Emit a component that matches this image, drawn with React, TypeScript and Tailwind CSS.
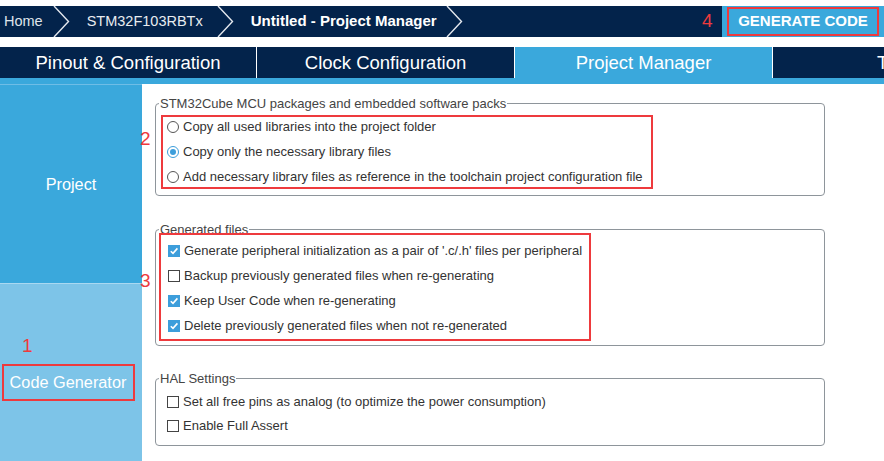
import React from 'react';

const RED = '#ee3a3d';

function Chevron() {
  return (
    <svg width="17" height="31" viewBox="0 0 17 31" className="shrink-0">
      <path d="M1 0 L15.5 15.5 L1 31" fill="none" stroke="#e4e8ee" strokeWidth="1.4" />
    </svg>
  );
}

function Radio({ checked }: { checked?: boolean }) {
  return (
    <span
      className={`flex h-[12px] w-[12px] shrink-0 items-center justify-center rounded-full border bg-white ${
        checked ? 'border-[#3d9edb]' : 'border-[#555]'
      }`}
    >
      {checked && <span className="h-[6px] w-[6px] rounded-full bg-[#3d9edb]" />}
    </span>
  );
}

function Check({ checked }: { checked?: boolean }) {
  if (checked) {
    return (
      <span className="flex h-[12px] w-[12px] shrink-0 items-center justify-center bg-[#3d9edb]">
        <svg width="10" height="10" viewBox="0 0 10 10">
          <path d="M1.8 5.2 L4 7.4 L8.4 2.4" fill="none" stroke="white" strokeWidth="1.6" />
        </svg>
      </span>
    );
  }
  return <span className="h-[12px] w-[12px] shrink-0 border border-[#444] bg-white" />;
}

function Row({ children, control }: { children: React.ReactNode; control: React.ReactNode }) {
  return (
    <div className="flex h-[20px] items-center gap-[4px] text-[13px] text-[#333] whitespace-nowrap">
      {control}
      <span>{children}</span>
    </div>
  );
}

export default function App() {
  return (
    <div
      className="relative h-[461px] w-[884px] overflow-hidden bg-white"
      style={{ fontFamily: '"Liberation Sans", Arial, sans-serif' }}
    >
      {/* breadcrumb */}
      <div className="mt-[6px] flex h-[31px] items-center bg-[#03234b] text-[14.5px]">
        <span className="ml-[4px] text-[#dfe4ea]">Home</span>
        <span className="ml-[10px]"><Chevron /></span>
        <span className="ml-[17px] text-[#e8ecf0]">STM32F103RBTx</span>
        <span className="ml-[14px]"><Chevron /></span>
        <span className="ml-[17px] text-[15px] font-bold text-white">Untitled - Project Manager</span>
        <span className="ml-[9px]"><Chevron /></span>
        <div className="ml-auto flex h-full w-[162px] items-center justify-center bg-[#3aa8dc]">
          <div
            className="flex h-[29px] w-[152px] items-center justify-center border-2 text-[15px] font-bold text-white"
            style={{ borderColor: RED }}
          >
            GENERATE CODE
          </div>
        </div>
      </div>

      {/* tabs */}
      <div className="mt-[10px] flex h-[31px] text-[18.5px] text-white">
        <div className="flex w-[257px] shrink-0 items-center justify-center border-r border-white bg-[#03234b]">Pinout &amp; Configuration</div>
        <div className="flex w-[258px] shrink-0 items-center justify-center border-r border-white bg-[#03234b]">Clock Configuration</div>
        <div className="flex w-[258px] shrink-0 items-center justify-center border-r border-white bg-[#3aa8dc]">Project Manager</div>
        <div className="flex w-[240px] shrink-0 items-center bg-[#03234b] pl-[104px]">Tools</div>
      </div>
      <div className="h-[6px] bg-[#3aa8dc]" />

      <div className="flex h-[377px]">
        {/* sidebar */}
        <div className="flex w-[142px] shrink-0 flex-col text-[16.3px] text-white">
          <div className="flex h-[199px] items-center justify-center border-t border-[#6fbde6] bg-[#3aa8dc]">Project</div>
          <div className="flex flex-1 flex-col items-center border-t border-[#a9d8f1] bg-[#7dc4e8] pt-[80px]">
            <div className="flex h-[37px] w-[133px] items-center justify-center border-2 -ml-[6px]" style={{ borderColor: RED }}>
              Code Generator
            </div>
          </div>
        </div>

        {/* content */}
        <div className="flex-1">
          <fieldset className="ml-[13px] mt-[12px] w-[670px] rounded-[4px] border border-[#8e959b] pb-[6px]">
            <legend className="ml-[3px] px-[1px] text-[13px] leading-[15px] text-[#444]">
              STM32Cube MCU packages and embedded software packs
            </legend>
            <div className="ml-[5px] mt-[4px] flex h-[74px] w-[492px] flex-col gap-[5px] border-2 pl-[4px]" style={{ borderColor: RED }}>
              <Row control={<Radio />}>Copy all used libraries into the project folder</Row>
              <Row control={<Radio checked />}>Copy only the necessary library files</Row>
              <Row control={<Radio />}>Add necessary library files as reference in the toolchain project configuration file</Row>
            </div>
          </fieldset>

          <fieldset className="ml-[13px] mt-[26px] w-[670px] rounded-[4px] border border-[#8e959b] pb-[4px]">
            <legend className="ml-[3px] px-[1px] text-[13px] leading-[15px] text-[#444]">Generated files</legend>
            <div className="relative ml-[3px] -mt-[4px] flex h-[108px] w-[432px] flex-col gap-[5px] border-2 pl-[7px] pt-[6px]" style={{ borderColor: RED }}>
              <Row control={<Check checked />}>Generate peripheral initialization as a pair of '.c/.h' files per peripheral</Row>
              <Row control={<Check />}>Backup previously generated files when re-generating</Row>
              <Row control={<Check checked />}>Keep User Code when re-generating</Row>
              <Row control={<Check checked />}>Delete previously generated files when not re-generated</Row>
            </div>
          </fieldset>

          <fieldset className="ml-[13px] mt-[25px] w-[670px] rounded-[4px] border border-[#8e959b] pb-[9px]">
            <legend className="ml-[3px] px-[1px] text-[13px] leading-[15px] text-[#444]">HAL Settings</legend>
            <div className="ml-[11px] mt-[6px] flex flex-col gap-[4px]">
              <Row control={<Check />}>Set all free pins as analog (to optimize the power consumption)</Row>
              <Row control={<Check />}>Enable Full Assert</Row>
            </div>
          </fieldset>
        </div>
      </div>

      {/* annotations */}
      <span className="absolute left-[702px] top-[11px] text-[19px] leading-[20px]" style={{ color: RED }}>4</span>
      <span className="absolute left-[140px] top-[129px] text-[19px] leading-[20px]" style={{ color: RED }}>2</span>
      <span className="absolute left-[140px] top-[271px] text-[19px] leading-[20px]" style={{ color: RED }}>3</span>
      <span className="absolute left-[22px] top-[336px] text-[19px] leading-[20px]" style={{ color: RED }}>1</span>
    </div>
  );
}
